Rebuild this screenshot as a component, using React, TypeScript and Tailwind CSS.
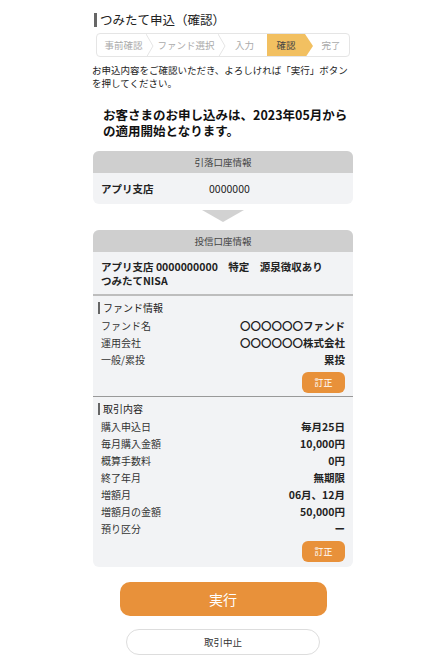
import React from "react";

const steps = ["事前確認", "ファンド選択", "入力", "確認", "完了"];
const stepWidths = ["w-[53px]", "w-[72px]", "w-[45px]", "w-[38px]", "flex-1"];

const fundRows = [
  ["ファンド名", "〇〇〇〇〇〇ファンド"],
  ["運用会社", "〇〇〇〇〇〇株式会社"],
  ["一般/累投", "累投"],
];

const tradeRows = [
  ["購入申込日", "毎月25日"],
  ["毎月購入金額", "10,000円"],
  ["概算手数料", "0円"],
  ["終了年月", "無期限"],
  ["増額月", "06月、12月"],
  ["増額月の金額", "50,000円"],
  ["預り区分", "ー"],
];

function Row({ label, value }: { label: string; value: string }) {
  return (
    <div className="flex justify-between items-center h-[17px] text-[10px]">
      <span className="text-[#333]">{label}</span>
      <span className="font-bold text-[10.5px] text-[#222]">{value}</span>
    </div>
  );
}

function FixButton() {
  return (
    <div className="flex justify-end pt-[4px]">
      <button className="w-[43px] h-[21px] rounded-[6px] bg-[#e8913a] text-white text-[9px]">
        訂正
      </button>
    </div>
  );
}

export default function App() {
  return (
    <div
      className="w-[446px] h-[664px] bg-white text-[#222] overflow-hidden"
      style={{ fontFamily: '"Noto Sans CJK JP", "Noto Sans", sans-serif' }}
    >
      <div className="w-[260px] mx-auto pt-[11px]">
        <h1 className="flex items-center text-[12.5px] leading-[18px] text-[#222]">
          <span className="w-[3px] h-[14px] bg-[#666] mr-[3px] ml-[1px]"></span>
          つみたて申込（確認）
        </h1>

        <div className="mt-[4px] ml-[3px] w-[254px] h-[24px] flex border border-[#e5e5e5] rounded-[4px] overflow-hidden text-[9.5px] text-[#aaa]">
          {steps.map((s, i) =>
            i === 3 ? (
              <div key={s} className={"relative flex items-center justify-center bg-[#f2c061] text-[#444] " + stepWidths[i]}>
                {s}
                <svg className="absolute right-[-8px] top-0 z-10" width="8" height="24" viewBox="0 0 8 24">
                  <path d="M0 0L8 12L0 24Z" fill="#f2c061" />
                </svg>
              </div>
            ) : (
              <div
                key={s}
                className={
                  "relative flex items-center justify-center " +
                  stepWidths[i] +
                  (i === 4 ? " pl-[8px]" : "")
                }
              >
                {s}
                {i < 2 && (
                  <svg className="absolute right-[-4px] top-0 z-10" width="8" height="24" viewBox="0 0 8 24">
                    <path d="M0 0L7 12L0 24" fill="white" stroke="#e5e5e5" strokeWidth="1" />
                  </svg>
                )}
              </div>
            )
          )}
        </div>

        <p className="mt-[7px] -ml-[1px] w-[270px] text-[9.5px] leading-[13px] text-[#222]">
          お申込内容をご確認いただき、よろしければ「実行」ボタン
          <br />
          を押してください。
        </p>

        <p className="mt-[17px] pl-[10px] text-[12.5px] leading-[16px] font-bold text-[#111]">
          お客さまのお申し込みは、2023年05月からの適用開始となります。
        </p>

        <div className="mt-[12px] rounded-[6px] bg-[#f2f3f5] overflow-hidden">
          <div className="h-[22px] bg-[#cfcfcf] flex items-center justify-center text-[9.5px] text-[#444]">
            引落口座情報
          </div>
          <div className="h-[31px] flex items-center px-[8px] text-[10.5px] font-bold">
            <span className="w-[108px]">アプリ支店</span>
            <span className="font-normal">0000000</span>
          </div>
        </div>

        <div className="flex justify-center mt-[6px]">
          <svg width="42" height="12" viewBox="0 0 42 12">
            <path d="M0 0H42L21 12Z" fill="#d2d2d2" />
          </svg>
        </div>

        <div className="mt-[8px] rounded-[6px] bg-[#f2f3f5] overflow-hidden">
          <div className="h-[22px] bg-[#cfcfcf] flex items-center justify-center text-[9.5px] text-[#444]">
            投信口座情報
          </div>
          <div className="px-[8px] pt-[8px] pb-[6px] text-[10.5px] leading-[14px] font-bold border-b-2 border-[#bdbdbd]">
            <div>アプリ支店 0000000000　特定　源泉徴収あり</div>
            <div>つみたてNISA</div>
          </div>

          <div className="px-[8px] pt-[3px] pb-[3px] border-b border-[#999]">
            <div className="flex items-center text-[10px] h-[17px] mb-[1px]">
              <span className="w-[2px] h-[12px] bg-[#666] mr-[3px] -ml-[3px]"></span>
              ファンド情報
            </div>
            {fundRows.map(([l, v]) => (
              <Row key={l} label={l} value={v} />
            ))}
            <FixButton />
          </div>

          <div className="px-[8px] pt-[3px] pb-[5px]">
            <div className="flex items-center text-[10px] h-[17px] mb-[1px]">
              <span className="w-[2px] h-[12px] bg-[#666] mr-[3px] -ml-[3px]"></span>
              取引内容
            </div>
            {tradeRows.map(([l, v]) => (
              <Row key={l} label={l} value={v} />
            ))}
            <FixButton />
          </div>
        </div>

        <div className="flex flex-col items-center mt-[15px]">
          <button className="w-[207px] h-[34px] rounded-[10px] bg-[#e8913a] text-white text-[14px]">
            実行
          </button>
          <button className="mt-[13px] w-[194px] h-[26px] rounded-full border border-[#ddd] bg-white text-[9.5px] text-[#333]">
            取引中止
          </button>
        </div>
      </div>
    </div>
  );
}
